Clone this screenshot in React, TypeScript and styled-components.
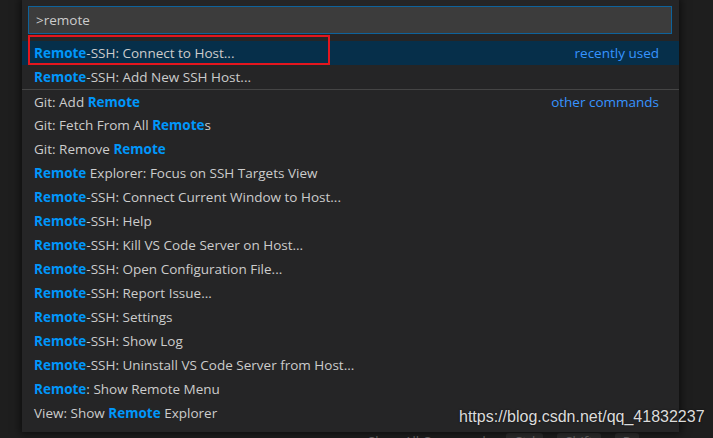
import React from "react";
import styled, { createGlobalStyle } from "styled-components";

const Global = createGlobalStyle`
  html, body { margin: 0; padding: 0; background: #1e1e1e; }
  body { width: 713px; height: 438px; overflow: hidden; }
`;

const Page = styled.div`
  position: relative;
  width: 713px;
  height: 438px;
  background: #1e1e1e;
  font-family: "Open Sans", "Noto Sans", sans-serif;
  overflow: hidden;
`;

const Hint = styled.div`
  position: absolute;
  left: 368px;
  top: 433px;
  display: flex;
  gap: 14px;
  color: #6b6b6b;
  font-size: 13px;
  line-height: 16px;
`;

const Key = styled.span`
  background: #2e2e2e;
  padding: 0 8px;
  border-radius: 3px;
`;

const Panel = styled.div`
  position: relative;
  margin-left: 22px;
  width: 657px;
  height: 432px;
  background: #252526;
  box-shadow: 0 0 8px 2px rgba(0, 0, 0, 0.55);
  display: flex;
  flex-direction: column;
  padding-top: 6px;
  box-sizing: border-box;
  z-index: 1;
`;

const InputWrap = styled.div`
  padding: 0 7px 0 6px;
`;

const Input = styled.div`
  height: 28px;
  box-sizing: border-box;
  background: #3c3c3c;
  border: 1px solid #0e639c;
  color: #cccccc;
  font-size: 13.5px;
  display: flex;
  align-items: center;
  padding-left: 7px;
`;

const List = styled.div`
  margin-top: 7px;
  display: flex;
  flex-direction: column;
`;

const Row = styled.div<{ $selected?: boolean; $sep?: boolean }>`
  height: 24px;
  display: flex;
  align-items: center;
  justify-content: space-between;
  padding: 0 20px 0 12px;
  font-size: 13.5px;
  color: #cccccc;
  background: ${(p) => (p.$selected ? "#062f4a" : "transparent")};
  border-top: ${(p) => (p.$sep ? "1px solid #454545" : "none")};
  box-sizing: border-box;
  white-space: nowrap;
`;

const Hl = styled.b`
  color: #0097fb;
  font-weight: 700;
`;

const Tag = styled.span`
  color: #3794ff;
`;

const Annotation = styled.div`
  position: absolute;
  left: 6px;
  top: 35px;
  width: 302px;
  height: 30px;
  box-sizing: border-box;
  border: 2px solid #e3161e;
  pointer-events: none;
`;

const Watermark = styled.div`
  position: absolute;
  left: 459px;
  top: 408px;
  font-family: "Liberation Sans", Arial, sans-serif;
  font-size: 16px;
  color: #dcdcdc;
  text-shadow: 0 0 2px rgba(0, 0, 0, 0.6);
  z-index: 2;
`;

type Item = { parts: (string | [string])[]; tag?: string; sep?: boolean; selected?: boolean };

const items: Item[] = [
  { parts: [["Remote"], "-SSH: Connect to Host..."], tag: "recently used", selected: true },
  { parts: [["Remote"], "-SSH: Add New SSH Host..."] },
  { parts: ["Git: Add ", ["Remote"]], tag: "other commands", sep: true },
  { parts: ["Git: Fetch From All ", ["Remote"], "s"] },
  { parts: ["Git: Remove ", ["Remote"]] },
  { parts: [["Remote"], " Explorer: Focus on SSH Targets View"] },
  { parts: [["Remote"], "-SSH: Connect Current Window to Host..."] },
  { parts: [["Remote"], "-SSH: Help"] },
  { parts: [["Remote"], "-SSH: Kill VS Code Server on Host..."] },
  { parts: [["Remote"], "-SSH: Open Configuration File..."] },
  { parts: [["Remote"], "-SSH: Report Issue..."] },
  { parts: [["Remote"], "-SSH: Settings"] },
  { parts: [["Remote"], "-SSH: Show Log"] },
  { parts: [["Remote"], "-SSH: Uninstall VS Code Server from Host..."] },
  { parts: [["Remote"], ": Show Remote Menu"] },
  { parts: ["View: Show ", ["Remote"], " Explorer"] },
];

export default function App() {
  return (
    <Page>
      <Global />
      <Hint>
        <span>Show All Commands</span>
        <Key>Ctrl</Key>
        <Key>Shift</Key>
        <Key>P</Key>
      </Hint>
      <Panel>
        <InputWrap>
          <Input>&gt;remote</Input>
        </InputWrap>
        <List>
          {items.map((it, i) => (
            <Row key={i} $selected={it.selected} $sep={it.sep}>
              <span>
                {it.parts.map((p, j) =>
                  typeof p === "string" ? <React.Fragment key={j}>{p}</React.Fragment> : <Hl key={j}>{p[0]}</Hl>
                )}
              </span>
              {it.tag && <Tag>{it.tag}</Tag>}
            </Row>
          ))}
        </List>
        <Annotation />
      </Panel>
      <Watermark>https://blog.csdn.net/qq_41832237</Watermark>
    </Page>
  );
}
